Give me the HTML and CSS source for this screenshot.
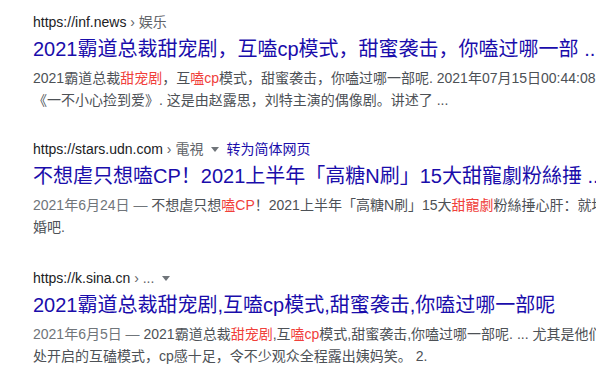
FILE: index.html
```html
<!DOCTYPE html>
<html lang="zh-CN">
<head>
    <meta charset="UTF-8">
    <meta name="viewport" content="width=device-width, initial-scale=1.0">
    <title>搜索结果</title>
    <link rel="stylesheet" href="styles.css">
</head>
<body>
    <div class="results">
        <div class="result">
            <div class="cite">https://inf.news<span class="crumb"> › 娱乐</span></div>
            <a class="title" href="#">2021霸道总裁甜宠剧，互嗑cp模式，甜蜜袭击，你嗑过哪一部 ...</a>
            <div class="snippet">2021霸道总裁<em>甜宠剧</em>，互<em>嗑cp</em>模式，甜蜜袭击，你嗑过哪一部呢. 2021年07月15日00:44:08.<br>《一不小心捡到爱》. 这是由赵露思，刘特主演的偶像剧。讲述了 ...</div>
        </div>
        <div class="result">
            <div class="cite">https://stars.udn.com<span class="crumb"> › 電視</span><span class="arrow"></span><a class="translate" href="#">转为简体网页</a></div>
            <a class="title" href="#">不想虐只想嗑CP！2021上半年「高糖N刷」15大甜寵劇粉絲捶 ...</a>
            <div class="snippet"><span class="date">2021年6月24日 — </span>不想虐只想<em>嗑CP</em>！2021上半年「高糖N刷」15大<em>甜寵劇</em>粉絲捶心肝：就地結<br>婚吧.</div>
        </div>
        <div class="result last">
            <div class="cite">https://k.sina.cn<span class="crumb"> › ...</span><span class="arrow"></span></div>
            <a class="title" href="#">2021霸道总裁甜宠剧,互嗑cp模式,甜蜜袭击,你嗑过哪一部呢</a>
            <div class="snippet"><span class="date">2021年6月5日 — </span>2021霸道总裁<em>甜宠剧</em>,互<em>嗑cp</em>模式,甜蜜袭击,你嗑过哪一部呢. ... 尤其是他们<br>处开启的互磕模式，cp感十足，令不少观众全程露出姨妈笑。 2.</div>
        </div>
    </div>
</body>
</html>
```

FILE: styles.css
```css
body {
    margin: 0;
    overflow: hidden;
    background: #fff;
    font-family: "Liberation Sans", Arial, "Noto Sans CJK SC", sans-serif;
}
.results {
    padding: 12px 0 0 33px;
    display: flex;
    flex-direction: column;
    gap: 28px;
}
.result {
    white-space: nowrap;
}
.result.last {
    margin-top: 2px;
}
.cite {
    font-size: 14px;
    line-height: 20px;
    color: #202124;
    display: flex;
    align-items: center;
}
.crumb {
    color: #5f6368;
    white-space: pre;
}
.arrow {
    width: 0;
    height: 0;
    margin: 1px 7px 0 8px;
    border-left: 4px solid transparent;
    border-right: 4px solid transparent;
    border-top: 5px solid #70757a;
}
.translate {
    color: #1a0dab;
    text-decoration: none;
}
.title {
    display: block;
    margin-top: 4px;
    font-size: 20px;
    line-height: 26px;
    color: #1a0dab;
    text-decoration: none;
}
.snippet {
    margin-top: 5px;
    font-size: 14px;
    line-height: 22px;
    color: #4d5156;
}
.snippet em {
    font-style: normal;
    color: #f0403a;
}
.date {
    color: #70757a;
}
```
